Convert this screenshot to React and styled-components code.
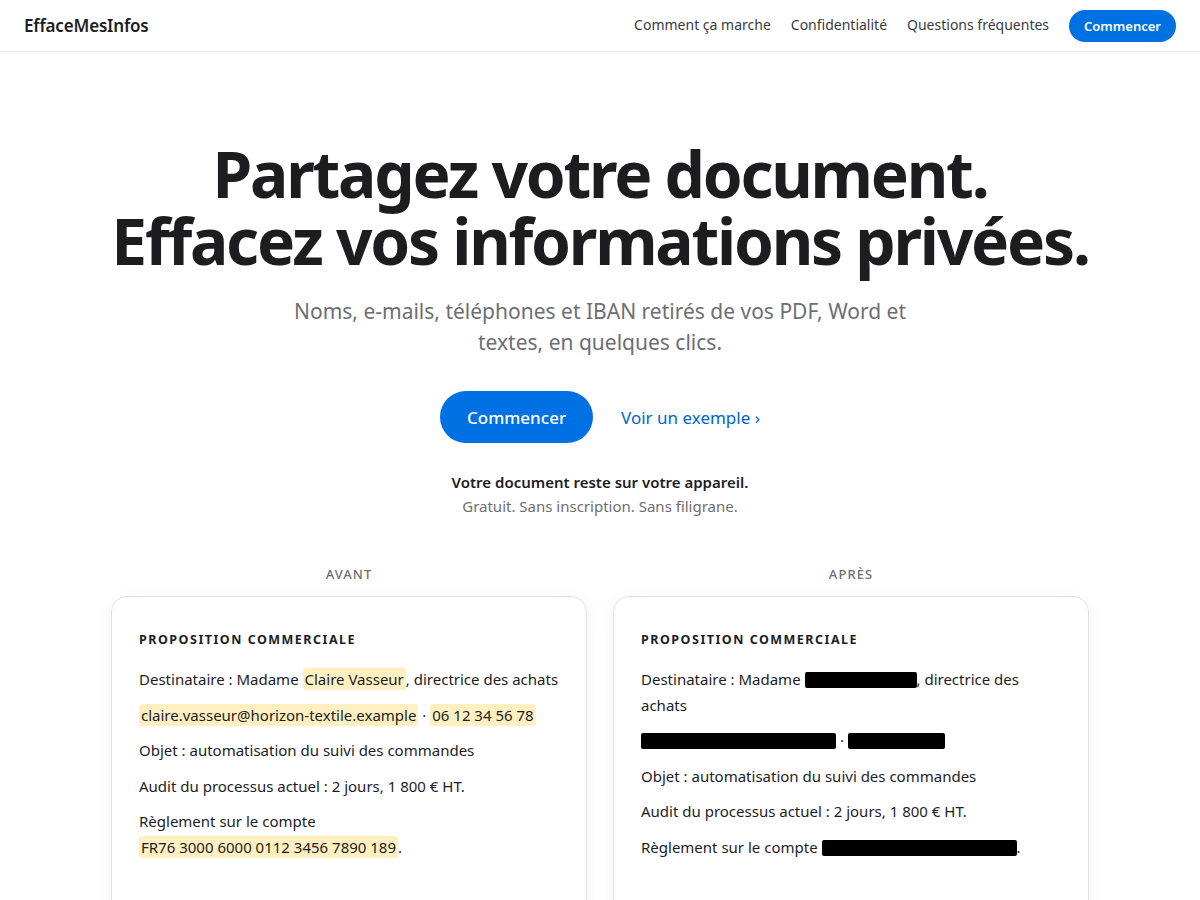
import React from "react";
import styled, { createGlobalStyle } from "styled-components";

const Global = createGlobalStyle`
  * { box-sizing: border-box; }
  html, body { margin: 0; padding: 0; background: #fff; }
  body { font-family: "Noto Sans", "Open Sans", sans-serif; color: #1d1d1f; -webkit-font-smoothing: antialiased; }
`;

const Header = styled.header`
  height: 52px;
  border-bottom: 1px solid #e8e8ea;
  display: flex;
  align-items: center;
  justify-content: space-between;
  padding: 0 24px;
`;

const Logo = styled.div`
  font-size: 17px;
  font-weight: 600;
  letter-spacing: -0.01em;
  color: #1d1d1f;
`;

const Nav = styled.nav`
  display: flex;
  align-items: center;
  gap: 20px;
`;

const NavLink = styled.a`
  font-size: 14px;
  color: #3a3a3c;
  text-decoration: none;
  line-height: 20px;
  margin-top: -1px;
`;

const Button = styled.a`
  display: inline-flex;
  align-items: center;
  justify-content: center;
  background: #0071e3;
  color: #fff;
  text-decoration: none;
  font-weight: ${(p) => (p.$big ? 500 : 600)};
  font-size: ${(p) => (p.$big ? "17px" : "13px")};
  height: ${(p) => (p.$big ? "52px" : "32px")};
  padding: 0 ${(p) => (p.$big ? "27px" : "15px")};
  border-radius: 999px;
`;

const Hero = styled.section`
  display: flex;
  flex-direction: column;
  align-items: center;
  padding-top: 88px;
  text-align: center;
`;

const Title = styled.h1`
  margin: 0;
  font-size: 64px;
  line-height: 1.05;
  font-weight: 700;
  letter-spacing: -0.035em;
  color: #1d1d1f;
`;

const Lead = styled.p`
  margin: 22px 0 0;
  max-width: 640px;
  font-size: 21px;
  line-height: 31px;
  color: #6e6e73;
`;

const Actions = styled.div`
  display: flex;
  align-items: center;
  gap: 28px;
  margin-top: 33px;
`;

const TextLink = styled.a`
  font-size: 17px;
  color: #0066cc;
  text-decoration: none;
`;

const Note = styled.div`
  margin-top: 27px;
  font-size: 15px;
  line-height: 24px;
`;

const NoteStrong = styled.div`
  font-weight: 600;
  color: #1d1d1f;
`;

const NoteSoft = styled.div`
  color: #6e6e73;
`;

const Compare = styled.div`
  display: grid;
  grid-template-columns: 1fr 1fr;
  gap: 26px;
  width: 978px;
  margin: 47px auto 0;
`;

const Column = styled.div`
  display: flex;
  flex-direction: column;
  align-items: stretch;
`;

const Label = styled.div`
  text-align: center;
  font-size: 13px;
  font-weight: 500;
  letter-spacing: 0.08em;
  color: #6e6e73;
  line-height: 18px;
  margin-bottom: 13px;
`;

const Card = styled.div`
  border: 1px solid #e3e3e6;
  border-radius: 16px;
  background: #fff;
  box-shadow: 0 4px 18px rgba(0, 0, 0, 0.05);
  padding: 34px 27px 40px;
  min-height: 330px;
  text-align: left;
`;

const DocTitle = styled.div`
  font-size: 12.5px;
  font-weight: 700;
  letter-spacing: 0.12em;
  color: #1d1d1f;
  margin-bottom: 19px;
`;

const Para = styled.p`
  margin: 0 0 10px;
  font-size: 15px;
  line-height: 1.7;
  color: #1d1d1f;
`;

const Mark = styled.span`
  background: #fff0c2;
  border-radius: 3px;
  padding: 1px 2px;
  white-space: nowrap;
`;

const Redact = styled.span`
  display: inline-block;
  width: ${(p) => p.$w}px;
  height: 16px;
  background: #000;
  border-radius: 2px;
  vertical-align: -3px;
`;

export default function App() {
  return (
    <>
      <Global />
      <Header>
        <Logo>EffaceMesInfos</Logo>
        <Nav>
          <NavLink href="#">Comment ça marche</NavLink>
          <NavLink href="#">Confidentialité</NavLink>
          <NavLink href="#">Questions fréquentes</NavLink>
          <Button href="#">Commencer</Button>
        </Nav>
      </Header>
      <Hero>
        <Title>
          Partagez votre document.
          <br />
          Effacez vos informations privées.
        </Title>
        <Lead>
          Noms, e-mails, téléphones et IBAN retirés de vos PDF, Word et textes, en quelques clics.
        </Lead>
        <Actions>
          <Button href="#" $big>Commencer</Button>
          <TextLink href="#">Voir un exemple ›</TextLink>
        </Actions>
        <Note>
          <NoteStrong>Votre document reste sur votre appareil.</NoteStrong>
          <NoteSoft>Gratuit. Sans inscription. Sans filigrane.</NoteSoft>
        </Note>
      </Hero>
      <Compare>
        <Column>
          <Label>AVANT</Label>
          <Card>
            <DocTitle>PROPOSITION COMMERCIALE</DocTitle>
            <Para>
              Destinataire : Madame <Mark>Claire Vasseur</Mark>, directrice des achats
            </Para>
            <Para>
              <Mark>claire.vasseur@horizon-textile.example</Mark> · <Mark>06 12 34 56 78</Mark>
            </Para>
            <Para>Objet : automatisation du suivi des commandes</Para>
            <Para>Audit du processus actuel : 2 jours, 1 800 € HT.</Para>
            <Para>
              Règlement sur le compte <Mark>FR76 3000 6000 0112 3456 7890 189</Mark>.
            </Para>
          </Card>
        </Column>
        <Column>
          <Label>APRÈS</Label>
          <Card>
            <DocTitle>PROPOSITION COMMERCIALE</DocTitle>
            <Para>
              Destinataire : Madame <Redact $w={112} />, directrice des achats
            </Para>
            <Para>
              <Redact $w={195} /> · <Redact $w={97} />
            </Para>
            <Para>Objet : automatisation du suivi des commandes</Para>
            <Para>Audit du processus actuel : 2 jours, 1 800 € HT.</Para>
            <Para>
              Règlement sur le compte <Redact $w={195} />.
            </Para>
          </Card>
        </Column>
      </Compare>
    </>
  );
}
